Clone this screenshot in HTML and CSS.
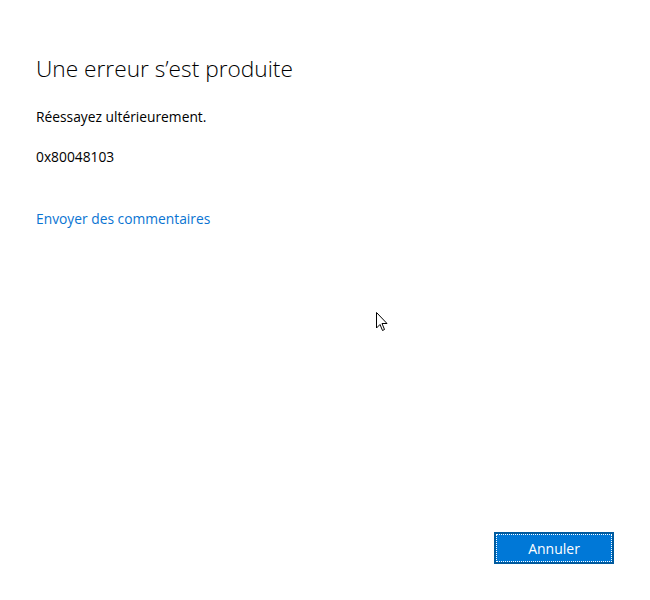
FILE: index.html
```html
<!DOCTYPE html>
<html lang="fr">
<head>
<meta charset="utf-8">
<link rel="stylesheet" href="styles.css">
</head>
<body>
<div class="dialog">
  <div class="content">
    <h1 class="title">Une erreur s’est produite</h1>
    <p class="msg">Réessayez ultérieurement.</p>
    <p class="code">0x80048103</p>
    <a class="link" href="#">Envoyer des commentaires</a>
  </div>
  <div class="footer">
    <button class="btn"><span class="btn-inner">Annuler</span></button>
  </div>
  <svg class="cursor" width="12" height="20" viewBox="0 0 12 20">
    <path d="M0.5 0.5 L0.5 16 L4 12.5 L6.5 18.5 L8.5 17.5 L6 11.5 L11 11.5 Z" fill="#fff" stroke="#000" stroke-width="1"/>
  </svg>
</div>
</body>
</html>
```
FILE: styles.css
```css
html, body {
  margin: 0;
  padding: 0;
  background: #fff;
}
.dialog {
  position: relative;
  width: 650px;
  height: 600px;
  display: flex;
  flex-direction: column;
  justify-content: space-between;
  font-family: "Open Sans", "Noto Sans", sans-serif;
  color: #000;
  box-sizing: border-box;
}
.content {
  padding: 53px 36px 0;
  display: flex;
  flex-direction: column;
  align-items: flex-start;
}
.title {
  margin: 0;
  font-weight: 300;
  font-size: 22.7px;
  line-height: 32px;
}
.msg {
  margin: 22px 0 0;
  font-size: 13.8px;
  line-height: 20px;
}
.code {
  margin: 20px 0 0;
  font-size: 13.8px;
  line-height: 20px;
}
.link {
  margin-top: 42px;
  font-size: 13.8px;
  line-height: 20px;
  color: #0a74d2;
  text-decoration: none;
}
.footer {
  display: flex;
  justify-content: flex-end;
  padding: 0 36px 36px 0;
}
.btn {
  width: 120px;
  height: 32px;
  padding: 2px;
  border: 0;
  background: #005a9e;
  display: flex;
  box-sizing: border-box;
}
.btn-inner {
  flex: 1;
  background: #0078d7;
  border: 1px dotted #fff;
  color: #fff;
  font-family: "Open Sans", "Noto Sans", sans-serif;
  font-size: 14px;
  display: flex;
  align-items: center;
  justify-content: center;
}
.cursor {
  position: absolute;
  left: 376px;
  top: 312px;
}
```
